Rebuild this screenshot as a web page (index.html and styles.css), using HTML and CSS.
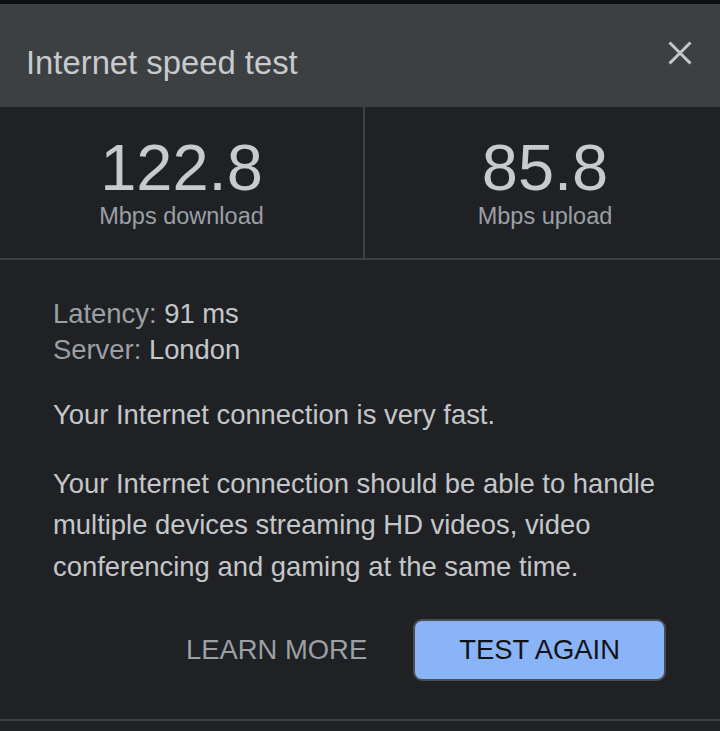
FILE: index.html
```html
<!DOCTYPE html>
<html lang="en">
<head>
<meta charset="utf-8">
<title>Internet speed test</title>
<link rel="stylesheet" href="styles.css">
</head>
<body>
<div class="topstrip"></div>
<div class="dialog">
  <header class="header">
    <h1 class="title">Internet speed test</h1>
    <button class="close" aria-label="Close">
      <svg width="24" height="24" viewBox="0 0 24 24"><path d="M1.5 1.5 L22.5 22.5 M22.5 1.5 L1.5 22.5" stroke="#c4c7ca" stroke-width="3" stroke-linecap="butt"/></svg>
    </button>
  </header>
  <section class="stats">
    <div class="stat">
      <div class="num">122.8</div>
      <div class="unit">Mbps download</div>
    </div>
    <div class="stat stat-right">
      <div class="num">85.8</div>
      <div class="unit">Mbps upload</div>
    </div>
  </section>
  <section class="body">
    <div class="meta">
      <div class="meta-line"><span class="key">Latency:</span> 91 ms</div>
      <div class="meta-line"><span class="key">Server:</span> London</div>
    </div>
    <p class="lead">Your Internet connection is very fast.</p>
    <p class="desc">Your Internet connection should be able to handle multiple devices streaming HD videos, video conferencing and gaming at the same time.</p>
    <div class="actions">
      <button class="learn">LEARN MORE</button>
      <button class="again">TEST AGAIN</button>
    </div>
  </section>
  <div class="footer"></div>
</div>
</body>
</html>
```
FILE: styles.css
```css
* { box-sizing: border-box; }
html, body {
  margin: 0;
  padding: 0;
  background: #202124;
  height: 100%;
  overflow: hidden;
}
body {
  font-family: "Liberation Sans", Arial, sans-serif;
  color: #c4c7ca;
}
.topstrip {
  height: 4px;
  background: #0d0e10;
}
.header {
  height: 103px;
  background: #3c4043;
  display: flex;
  justify-content: space-between;
  align-items: flex-start;
  padding: 37px 28px 0 26px;
}
.title {
  margin: 2px 0 0 0;
  font-size: 32.8px;
  line-height: 40px;
  font-weight: 400;
  color: #c8cacd;
}
.close {
  margin: 0;
  padding: 0;
  border: 0;
  background: transparent;
  width: 24px;
  height: 24px;
  display: block;
}
.close svg { display: block; }
.stats {
  display: grid;
  grid-template-columns: 363px 1fr;
  border-bottom: 2px solid #3c4043;
}
.stat {
  text-align: center;
  padding: 25px 0 30px;
}
.stat-right {
  border-left: 2px solid #3c4043;
  padding-left: 5px;
}
.num {
  font-size: 65px;
  line-height: 72px;
  color: #c8cacd;
}
.unit {
  font-size: 23.5px;
  line-height: 24px;
  color: #9aa0a6;
}
.body {
  padding: 36px 51px 38px 53px;
  font-size: 27.4px;
}
.meta-line {
  line-height: 36px;
  color: #c4c7ca;
}
.key { color: #9aa0a6; }
.lead {
  margin: 26px 0 0;
  line-height: 41.5px;
  color: #c4c7ca;
}
.desc {
  margin: 27px 0 0;
  line-height: 41.5px;
  color: #c4c7ca;
}
.actions {
  margin-top: 32px;
  display: flex;
  justify-content: flex-end;
  align-items: center;
  padding-right: 3px;
}
.actions button {
  font-family: "Liberation Sans", Arial, sans-serif;
  font-size: 27.4px;
  cursor: pointer;
}
.learn {
  background: transparent;
  border: 0;
  padding: 0;
  color: #9aa0a6;
  margin-right: 46px;
  line-height: 32px;
}
.again {
  height: 62px;
  padding: 0 44px;
  background: #8ab4f8;
  color: #111214;
  border: 2px solid #4a4d51;
  border-radius: 9px;
}
.footer {
  border-top: 2px solid #3c4043;
  height: 12px;
}
```
